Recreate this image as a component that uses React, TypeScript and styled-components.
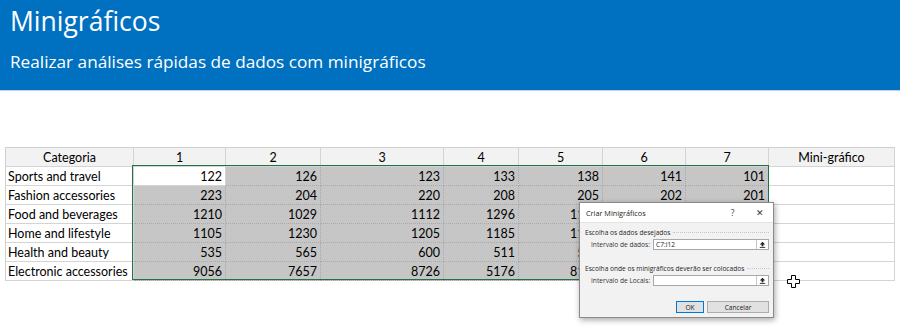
import React from "react";
import styled, { createGlobalStyle } from "styled-components";

const GlobalStyle = createGlobalStyle`
  html, body { margin: 0; padding: 0; background: #ffffff; }
  body { width: 900px; height: 330px; overflow: hidden; }
  * { box-sizing: border-box; }
`;

const Page = styled.div`
  position: relative;
  width: 900px;
  height: 330px;
  background: #fff;
`;

const Banner = styled.header`
  height: 91px;
  background: #0070c0;
  border-bottom: 1px solid #b9d3ec;
  padding: 4px 0 0 10px;
  display: flex;
  flex-direction: column;
  color: #fff;
  font-family: "Open Sans", "Noto Sans", sans-serif;
`;

const Title = styled.h1`
  margin: 0;
  font-weight: 400;
  font-size: 26.5px;
  line-height: 34px;
`;

const Subtitle = styled.p`
  margin: 12px 0 0 0;
  font-size: 17.2px;
  line-height: 24px;
`;

const TableWrap = styled.div`
  position: relative;
  margin: 56px 0 0 5px;
  width: fit-content;
`;

const Grid = styled.div`
  display: grid;
  grid-template-columns: 128px 92px 95px 123px 75px 84px 83px 83px 126px;
  grid-auto-rows: 19px;
  font-family: "Lato", "Liberation Sans", sans-serif;
  font-size: 12.5px;
  color: #000;
  border-top: 1px solid #d0d0d0;
  border-left: 1px solid #d0d0d0;
`;

type CellProps = { $kind: "head" | "cat" | "num" | "active" | "blank" };

const Cell = styled.div<CellProps>`
  display: flex;
  align-items: center;
  padding: 0 3px 0 ${(p) => (p.$kind === "cat" ? 2 : 3)}px;
  white-space: nowrap;
  overflow: hidden;
  border-right: 1px solid #d4d4d4;
  border-bottom: 1px solid #d4d4d4;
  justify-content: ${(p) =>
    p.$kind === "head" ? "center" : p.$kind === "cat" || p.$kind === "blank" ? "flex-start" : "flex-end"};
  background: ${(p) =>
    p.$kind === "head" ? "#f2f2f2" : p.$kind === "num" ? "#c6c6c6" : "#ffffff"};
  border-right-style: ${(p) => (p.$kind === "num" ? "dotted" : "solid")};
  border-bottom-style: ${(p) => (p.$kind === "num" ? "dotted" : "solid")};
  border-color: ${(p) => (p.$kind === "num" ? "#a9a9a9" : "#d4d4d4")};
`;

const Selection = styled.div`
  position: absolute;
  left: 127px;
  top: 18px;
  width: 637px;
  height: 115px;
  border: 1.5px solid #217346;
  pointer-events: none;
`;

const Dialog = styled.div`
  position: absolute;
  left: 579px;
  top: 202px;
  width: 195px;
  height: 116px;
  background: #f2f2f2;
  border: 1px solid #8a8a8a;
  box-shadow: 1px 2px 6px rgba(0, 0, 0, 0.35);
  font-family: "Open Sans", "Noto Sans", sans-serif;
  font-size: 6.6px;
  color: #222;
  display: flex;
  flex-direction: column;
  white-space: nowrap;
`;

const DialogTitleBar = styled.div`
  height: 20px;
  display: flex;
  align-items: center;
  padding: 0 0 0 6px;
  background: #ffffff;
  border-bottom: 1px solid #e4e4e4;
  font-size: 7.3px;
`;

const DialogTitle = styled.span`
  flex: 1;
`;

const TitleButton = styled.span`
  width: 27px;
  text-align: center;
  font-size: 8.5px;
  color: #333;
`;

const DialogBody = styled.div`
  flex: 1;
  display: flex;
  flex-direction: column;
  padding: 3px 4px 0 5px;
`;

const GroupLabel = styled.div`
  display: flex;
  align-items: center;
  gap: 3px;
  height: 12px;
  color: #1e1e1e;
  &::after {
    content: "";
    flex: 1;
    border-top: 1px dotted #c8c8c8;
  }
`;

const FieldRow = styled.div<{ $gapBelow: number }>`
  display: flex;
  align-items: center;
  height: 13px;
  margin: 0 0 ${(p) => p.$gapBelow}px 0;
  padding-left: 6px;
`;

const FieldLabel = styled.span`
  width: 62px;
  color: #333;
`;

const FieldInput = styled.div`
  flex: 1;
  height: 11px;
  display: flex;
  align-items: center;
  background: #fff;
  border: 1px solid #a8a8a8;
  padding-left: 2px;
`;

const InputValue = styled.span`
  flex: 1;
`;

const PickButton = styled.span`
  width: 12px;
  height: 9px;
  display: flex;
  align-items: center;
  justify-content: center;
  border-left: 1px solid #c8c8c8;
`;

const ButtonRow = styled.div`
  margin-top: auto;
  margin-bottom: 4px;
  display: flex;
  justify-content: flex-end;
  gap: 3px;
`;

const DlgButton = styled.div<{ $primary?: boolean }>`
  height: 12px;
  width: ${(p) => (p.$primary ? 28 : 62)}px;
  display: flex;
  align-items: center;
  justify-content: center;
  background: #e1e1e1;
  border: 1px solid ${(p) => (p.$primary ? "#0078d7" : "#adadad")};
  color: #222;
`;

const Cursor = styled.svg`
  position: absolute;
  left: 787px;
  top: 275px;
`;

const headers = ["Categoria", "1", "2", "3", "4", "5", "6", "7", "Mini-gráfico"];

const rows: [string, number[]][] = [
  ["Sports and travel", [122, 126, 123, 133, 138, 141, 101]],
  ["Fashion accessories", [223, 204, 220, 208, 205, 202, 201]],
  ["Food and beverages", [1210, 1029, 1112, 1296, 1150, 1180, 1190]],
  ["Home and lifestyle", [1105, 1230, 1205, 1185, 1120, 1160, 1170]],
  ["Health and beauty", [535, 565, 600, 511, 520, 530, 540]],
  ["Electronic accessories", [9056, 7657, 8726, 5176, 8120, 8200, 8300]],
];

const UpIcon = () => (
  <svg width="7" height="7" viewBox="0 0 7 7">
    <path d="M3.5 0.8 L6.2 3.6 L4.4 3.6 L4.4 5.2 L2.6 5.2 L2.6 3.6 L0.8 3.6 Z" fill="#222" />
    <rect x="0.8" y="5.9" width="5.4" height="0.9" fill="#222" />
  </svg>
);

export default function App() {
  return (
    <Page>
      <GlobalStyle />
      <Banner>
        <Title>Minigráficos</Title>
        <Subtitle>Realizar análises rápidas de dados com minigráficos</Subtitle>
      </Banner>
      <TableWrap>
        <Grid>
          {headers.map((h) => (
            <Cell key={h} $kind="head">{h}</Cell>
          ))}
          {rows.map(([cat, vals], ri) => (
            <React.Fragment key={cat}>
              <Cell $kind="cat">{cat}</Cell>
              {vals.map((v, ci) => (
                <Cell key={ci} $kind={ri === 0 && ci === 0 ? "active" : "num"}>
                  {v}
                </Cell>
              ))}
              <Cell $kind="blank" />
            </React.Fragment>
          ))}
        </Grid>
        <Selection />
      </TableWrap>
      <Dialog>
        <DialogTitleBar>
          <DialogTitle>Criar Minigráficos</DialogTitle>
          <TitleButton>?</TitleButton>
          <TitleButton>✕</TitleButton>
        </DialogTitleBar>
        <DialogBody>
          <GroupLabel>Escolha os dados desejados</GroupLabel>
          <FieldRow $gapBelow={11}>
            <FieldLabel>Intervalo de dados:</FieldLabel>
            <FieldInput>
              <InputValue>C7:I12</InputValue>
              <PickButton><UpIcon /></PickButton>
            </FieldInput>
          </FieldRow>
          <GroupLabel>Escolha onde os minigráficos deverão ser colocados</GroupLabel>
          <FieldRow $gapBelow={0}>
            <FieldLabel>Intervalo de Locais:</FieldLabel>
            <FieldInput>
              <InputValue />
              <PickButton><UpIcon /></PickButton>
            </FieldInput>
          </FieldRow>
          <ButtonRow>
            <DlgButton $primary>OK</DlgButton>
            <DlgButton>Cancelar</DlgButton>
          </ButtonRow>
        </DialogBody>
      </Dialog>
      <Cursor width="13" height="13" viewBox="0 0 13 13">
        <path
          d="M4.5 0.5 H8.5 V4.5 H12.5 V8.5 H8.5 V12.5 H4.5 V8.5 H0.5 V4.5 H4.5 Z"
          fill="#fff"
          stroke="#000"
          strokeWidth="1"
        />
      </Cursor>
    </Page>
  );
}
